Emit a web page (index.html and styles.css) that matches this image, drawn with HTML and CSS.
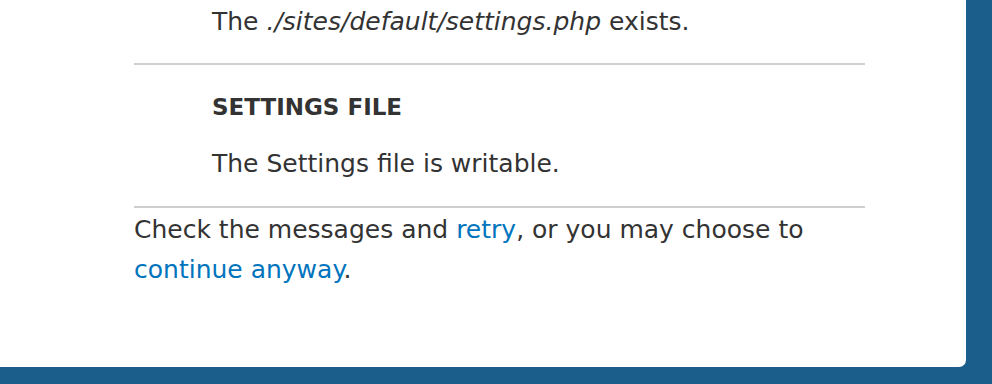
FILE: index.html
```html
<!DOCTYPE html>
<html>

<head>
    <link rel="stylesheet" href="styles.css">
</head>

<body>

    <div class="page">
        <div class="content">
            <div class="requirement">
                <div class="description">The <em>./sites/default/settings.php</em> exists.</div>
            </div>
            <hr>
            <div class="requirement">
                <h3 class="title">SETTINGS FILE</h3>
                <div class="description">The Settings file is writable.</div>
            </div>
            <hr>
            <p class="summary">Check the messages and <a href="#">retry</a>, or you may choose to <a href="#">continue anyway</a>.</p>
        </div>
    </div>

</body>

</html>
```

FILE: styles.css
```css
body {
    font-family: "DejaVu Sans", "Lucida Grande", sans-serif;
    margin: 0;
    background-color: #1b5e8c;
    color: #333;
}

.page {
    width: 966px;
    height: 367px;
    background-color: #fff;
    border-radius: 0 0 7px 0;
    box-sizing: border-box;
    padding: 0 101px 0 134px;
}

.content {
    font-size: 25px;
    line-height: 40px;
}

.requirement {
    padding-left: 78px;
}

.requirement:first-child {
    padding-top: 2px;
    padding-bottom: 21px;
}

.title {
    font-size: 23px;
    font-weight: bold;
    margin: 0;
    padding-top: 22px;
}

.title + .description {
    margin-top: 17px;
    padding-bottom: 22px;
}

hr {
    border: none;
    height: 2px;
    background-color: #cfcfcf;
    margin: 0;
}

.summary {
    margin: 2px 0 0;
}

a {
    color: #0074bd;
    text-decoration: none;
}
```
